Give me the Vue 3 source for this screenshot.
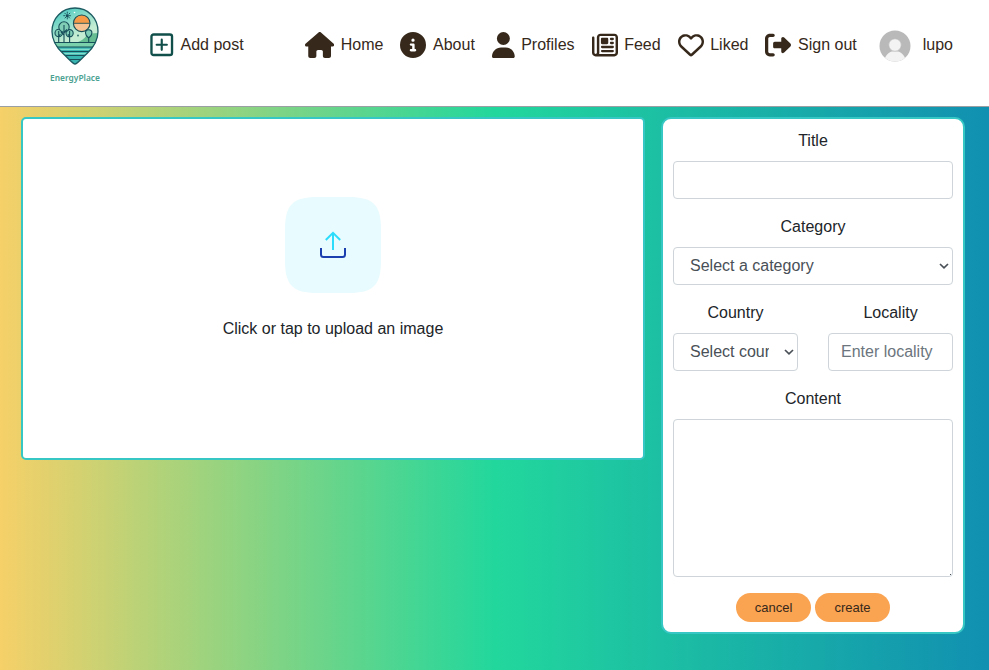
<script setup>
import { ref } from 'vue'

const links = [
  { label: 'Home', w: 576, path: 'M575.8 255.5c0 18-15 32.1-32 32.1h-32l.7 160.2c0 2.7-.2 5.4-.5 8.1V472c0 22.1-17.9 40-40 40H456c-1.1 0-2.2 0-3.3-.1c-1.4 .1-2.8 .1-4.2 .1H416 392c-22.1 0-40-17.9-40-40V448 384c0-17.7-14.3-32-32-32H256c-17.7 0-32 14.3-32 32v64 24c0 22.1-17.9 40-40 40H160 128.1c-1.5 0-3-.1-4.5-.2c-1.2 .1-2.4 .2-3.6 .2H104c-22.1 0-40-17.9-40-40V360c0-.9 0-1.9 .1-2.8V287.6H32c-18 0-32-14-32-32.1c0-9 3-17 10-24L266.4 8c7-7 15-8 22-8s15 2 21 7L564.8 231.5c8 7 12 15 11 24z' },
  { label: 'About', w: 512, path: 'M256 512A256 256 0 1 0 256 0a256 256 0 1 0 0 512zM216 336h24V272H216c-13.3 0-24-10.7-24-24s10.7-24 24-24h48c13.3 0 24 10.7 24 24v88h8c13.3 0 24 10.7 24 24s-10.7 24-24 24H216c-13.3 0-24-10.7-24-24s10.7-24 24-24zm40-208a32 32 0 1 1 0 64 32 32 0 1 1 0-64z' },
  { label: 'Profiles', w: 448, path: 'M224 256A128 128 0 1 0 224 0a128 128 0 1 0 0 256zm-45.7 48C79.8 304 0 383.8 0 482.3C0 498.7 13.3 512 29.7 512H418.3c16.4 0 29.7-13.3 29.7-29.7C448 383.8 368.2 304 269.7 304H178.3z' },
  { label: 'Feed', w: 512, path: 'M168 80c-13.3 0-24 10.7-24 24V408c0 8.4-1.4 16.5-4.1 24H440c13.3 0 24-10.7 24-24V104c0-13.3-10.7-24-24-24H168zM72 480c-39.8 0-72-32.2-72-72V112C0 98.7 10.7 88 24 88s24 10.7 24 24V408c0 13.3 10.7 24 24 24s24-10.7 24-24V104c0-39.8 32.2-72 72-72H440c39.8 0 72 32.2 72 72V408c0 39.8-32.2 72-72 72H72zM176 136c0-13.3 10.7-24 24-24h96c13.3 0 24 10.7 24 24v80c0 13.3-10.7 24-24 24H200c-13.3 0-24-10.7-24-24V136zm200-24h32c13.3 0 24 10.7 24 24s-10.7 24-24 24H376c-13.3 0-24-10.7-24-24s10.7-24 24-24zm0 80h32c13.3 0 24 10.7 24 24s-10.7 24-24 24H376c-13.3 0-24-10.7-24-24s10.7-24 24-24zM200 272H408c13.3 0 24 10.7 24 24s-10.7 24-24 24H200c-13.3 0-24-10.7-24-24s10.7-24 24-24zm0 80H408c13.3 0 24 10.7 24 24s-10.7 24-24 24H200c-13.3 0-24-10.7-24-24s10.7-24 24-24z' },
  { label: 'Liked', w: 512, path: 'M225.8 468.2l-2.5-2.3L48.1 303.2C17.4 274.7 0 234.7 0 192.8v-3.3c0-70.4 50-130.8 119.2-144C158.6 37.9 198.9 47 231 69.6c9 6.4 17.4 13.8 25 22.3c4.2-4.8 8.7-9.2 13.5-13.3c3.7-3.2 7.5-6.2 11.5-9C313.1 47 353.4 37.9 392.8 45.4C462 58.6 512 119.1 512 189.5v3.3c0 41.9-17.4 81.9-48.1 110.4L288.7 465.9l-2.5 2.3c-8.2 7.6-19 11.9-30.2 11.9s-22-4.2-30.2-11.9zM239.1 145c-.4-.3-.7-.7-1-1.1l-17.8-20c-23.1-25.9-58-37.7-92-31.2C81.6 101.5 48 142.1 48 189.5v3.3c0 28.5 11.9 55.8 32.8 75.2L256 430.7 431.2 268c20.9-19.4 32.8-46.7 32.8-75.2v-3.3c0-47.3-33.6-88-80.1-96.9c-34-6.5-69 5.4-92 31.2l-17.8 20c-.3 .4-.7 .7-1 1.1c-4.5 4.5-10.6 7-16.9 7s-12.4-2.5-16.9-7z' },
  { label: 'Sign out', w: 512, path: 'M377.9 105.9L500.7 228.7c7.2 7.2 11.3 17.1 11.3 27.3s-4.1 20.1-11.3 27.3L377.9 406.1c-6.4 6.4-15 9.9-24 9.9c-18.7 0-33.9-15.2-33.9-33.9l0-62.1-128 0c-17.7 0-32-14.3-32-32l0-64c0-17.7 14.3-32 32-32l128 0 0-62.1c0-18.7 15.2-33.9 33.9-33.9c9 0 17.6 3.6 24 9.9zM160 96L96 96c-17.7 0-32 14.3-32 32l0 256c0 17.7 14.3 32 32 32l64 0c17.7 0 32 14.3 32 32s-14.3 32-32 32l-64 0c-53 0-96-43-96-96L0 128C0 75 43 32 96 32l64 0c17.7 0 32 14.3 32 32s-14.3 32-32 32z' },
]

const title = ref('')
const category = ref('')
const country = ref('')
const locality = ref('')
const content = ref('')
</script>

<template>
  <div class="page">
    <header class="navbar">
      <a class="brand">
        <svg class="pin" viewBox="0 0 48 58">
          <defs>
            <linearGradient id="sky" x1="0" y1="0" x2="0.4" y2="1">
              <stop offset="0" stop-color="#35c4bd" />
              <stop offset="0.6" stop-color="#c4ecd2" />
            </linearGradient>
            <clipPath id="drop">
              <path d="M24 57C22 57 18 52 12 46.500C5 40 1 33 1 24.500C1 11 11 1 24 1S47 11 47 24.500C47 33 43 40 36 46.500C30 52 26 57 24 57Z" />
            </clipPath>
          </defs>
          <g clip-path="url(#drop)">
            <rect width="48" height="58" fill="url(#sky)" />
            <path d="M24 36Q32 34 36 28Q40 26 48 26V37H24Z" fill="#65bd91" />
            <path d="M0 35.500H48V40H0Z" fill="#7bd1ac" />
            <path d="M0 40H48V58H0Z" fill="#38b4b1" />
            <path d="M0 35.500H48M0 40H48M3 44.500H45M8 48.500H40M14 52.500H34" stroke="#174e59" stroke-width="1" />
            <path d="M4 42.300H44M9 46.600H39" stroke="#83dbc9" stroke-width="1.300" />
          </g>
          <circle cx="30.700" cy="16.300" r="8.300" fill="#f79a48" />
          <path d="M22.400 16.300H39A8.300 8.300 0 0 1 22.400 16.300Z" fill="#f8c393" />
          <path d="M22.400 16.300H39" stroke="#345b57" stroke-width="1" />
          <circle cx="30.700" cy="16.300" r="8.300" fill="none" stroke="#174e59" stroke-width="1.100" />
          <g fill="#80ceb5" stroke="#174e59" stroke-width="1.100">
            <circle cx="7.700" cy="26" r="3.700" />
            <circle cx="18.600" cy="26.200" r="3.600" />
            <circle cx="13" cy="20" r="5.200" />
            <path d="M13 18V35.500M7.700 24V35.500M18.600 24V35.500M13 25.500L16 22.500M13 28L10 25M7.700 29L9.500 27.300M18.600 29L16.900 27.300" />
            <path d="M37.700 35V31C35.200 29 34.500 27.500 34.500 26A3.200 3.200 0 0 1 40.900 26C40.900 27.500 40.200 29 37.700 31" />
          </g>
          <path d="M16.300 4.700V12.700M12.300 8.700H20.300M13.500 5.900L19.100 11.500M19.100 5.900L13.500 11.500" stroke="#174e59" stroke-width=".9" stroke-dasharray="2 .8" />
          <circle cx="16.300" cy="8.700" r="1.500" fill="#174e59" />
          <circle cx="23.500" cy="5.500" r=".8" fill="#fff" />
          <circle cx="27" cy="28.500" r=".9" fill="#276b68" />
          <path d="M24 57C22 57 18 52 12 46.500C5 40 1 33 1 24.500C1 11 11 1 24 1S47 11 47 24.500C47 33 43 40 36 46.500C30 52 26 57 24 57Z" fill="none" stroke="#1d5b62" stroke-width="1.300" />
        </svg>
        <span class="brand-name">EnergyPlace</span>
      </a>

      <a class="link add">
        <svg class="icon-add" viewBox="0 0 24 24" fill="none" stroke="#114f4a">
          <rect x="1.500" y="1.500" width="21" height="21" rx="2.200" stroke-width="2.400" />
          <path d="M12 6.800V17.200M6.800 12H17.200" stroke-width="2.200" stroke-linecap="round" />
        </svg>
        <span>Add post</span>
      </a>

      <nav class="links">
        <a v-for="link in links" :key="link.label" class="link">
          <svg class="icon" :viewBox="`0 0 ${link.w} 512`"><path :d="link.path" fill="currentColor" /></svg>
          <span>{{ link.label }}</span>
        </a>
      </nav>

      <a class="profile">
        <svg class="avatar" viewBox="0 0 32 32">
          <defs><clipPath id="face"><circle cx="16" cy="16" r="15.500" /></clipPath></defs>
          <g clip-path="url(#face)">
            <rect width="32" height="32" fill="#b9b9b9" />
            <path d="M5 32C6 25 10 21 16 21S26 25 27 32Z" fill="#f3f3f3" />
            <circle cx="16" cy="15" r="6.300" fill="#f3f3f3" stroke="#b9b9b9" stroke-width=".8" />
          </g>
        </svg>
        <span>lupo</span>
      </a>
    </header>

    <main class="main">
      <section class="upload">
        <svg class="upload-tile" viewBox="0 0 96 96">
          <path d="M0 32C0 8 8 0 32 0H64C88 0 96 8 96 32V64C96 88 88 96 64 96H32C8 96 0 88 0 64Z" fill="#e8fbfe" />
          <path d="M48 53V36M40.800 43L48 35.800L55.200 43" fill="none" stroke="#2cdcfb" stroke-width="2" />
          <path d="M36 51V57.500Q36 60 38.500 60H57.500Q60 60 60 57.500V51" fill="none" stroke="#1b3fae" stroke-width="2" />
        </svg>
        <p>Click or tap to upload an image</p>
      </section>

      <form class="card" @submit.prevent>
        <div class="group">
          <label for="title">Title</label>
          <input id="title" v-model="title" class="control" type="text">
        </div>
        <div class="group">
          <label for="category">Category</label>
          <div class="select">
            <select id="category" v-model="category" class="control">
              <option value="">Select a category</option>
            </select>
            <svg class="chevron" viewBox="0 0 10 6"><path d="M1 1L5 4.800L9 1" /></svg>
          </div>
        </div>
        <div class="pair">
          <div class="group">
            <label for="country">Country</label>
            <div class="select">
              <select id="country" v-model="country" class="control">
                <option value="">Select country</option>
              </select>
              <svg class="chevron" viewBox="0 0 10 6"><path d="M1 1L5 4.800L9 1" /></svg>
            </div>
          </div>
          <div class="group">
            <label for="locality">Locality</label>
            <input id="locality" v-model="locality" class="control" type="text" placeholder="Enter locality">
          </div>
        </div>
        <div class="group">
          <label for="content">Content</label>
          <div class="select">
            <textarea id="content" v-model="content" class="control area" rows="6"></textarea>
            <i class="grip"></i>
          </div>
        </div>
        <div class="actions">
          <button type="button">cancel</button>
          <button type="submit">create</button>
        </div>
      </form>
    </main>
  </div>
</template>

<style>
body {
  margin: 0;
}
</style>

<style scoped>
* {
  box-sizing: border-box;
}
.page {
  min-height: 670px;
  display: flex;
  flex-direction: column;
  font: 16px/24px "Liberation Sans", Arial, sans-serif;
  color: #212529;
  background: linear-gradient(90deg, #f6d068 0%, #22d79c 50%, #1190b1 100%);
}
.navbar {
  height: 107px;
  display: flex;
  align-items: flex-start;
  padding: 0 36px 0 50px;
  background: #fff;
  border-bottom: 1px solid #999fa3;
  color: #36291b;
}
.brand {
  width: 50px;
  padding-top: 7px;
  display: flex;
  flex-direction: column;
  align-items: center;
}
.pin {
  width: 48px;
  height: 58px;
}
.brand-name {
  margin-top: 7px;
  font: 600 8.400px/12px "Noto Sans", sans-serif;
  color: #4ba191;
}
.link,
.profile {
  display: flex;
  align-items: center;
  height: 26px;
  white-space: nowrap;
}
.link {
  gap: 6.600px;
}
.add {
  margin: 32px 0 0 50.400px;
}
.icon-add {
  width: 23.500px;
  height: 23.500px;
}
.links {
  display: flex;
  gap: 17px;
  margin: 32px 0 0 auto;
}
.icon {
  height: 26px;
  width: auto;
}
.profile {
  gap: 12px;
  margin: 32px 0 0 22px;
}
.avatar {
  width: 32px;
  height: 32px;
  margin-top: 2px;
}
.main {
  display: grid;
  grid-template-columns: 624px 304px;
  gap: 16px;
  align-items: start;
  padding: 10px 24px 36px 21px;
}
.upload {
  height: 343px;
  padding-top: 78px;
  display: flex;
  flex-direction: column;
  align-items: center;
  background: #fff;
  border: 2px solid #36c7c4;
  border-radius: 5px;
}
.upload-tile {
  width: 96px;
  height: 96px;
}
.upload p {
  margin: 24px 0 0;
}
.card {
  padding: 10px;
  background: #fff;
  border: 2px solid #36c7c4;
  border-radius: 10px;
}
.group {
  display: flex;
  flex-direction: column;
  gap: 8px;
  margin-bottom: 16px;
  text-align: center;
}
.control {
  display: block;
  width: 100%;
  height: 38px;
  padding: 6px 12px;
  border: 1px solid #ced4da;
  border-radius: 4px;
  background: #fff;
  color: #495057;
  font: inherit;
}
.control::placeholder {
  color: #6c757d;
}
.select {
  position: relative;
}
select.control {
  appearance: none;
  padding: 6px 28px 6px 16px;
}
.chevron {
  position: absolute;
  right: 4px;
  top: 16px;
  width: 10px;
  height: 6px;
  fill: none;
  stroke: #495057;
  stroke-width: 1.700;
  pointer-events: none;
}
.area {
  height: 158px;
  resize: none;
}
.grip {
  position: absolute;
  right: 2px;
  bottom: 2px;
  width: 1px;
  height: 1px;
  background: #495057;
}
.pair {
  display: grid;
  grid-template-columns: 1fr 1fr;
  gap: 30px;
}
.actions {
  display: flex;
  justify-content: center;
  gap: 4px;
}
.actions button {
  width: 75px;
  height: 29px;
  padding: 0;
  border: 0;
  border-radius: 15px;
  background: #faa351;
  color: #36291b;
  font: 13px "Liberation Sans", Arial, sans-serif;
}
</style>
